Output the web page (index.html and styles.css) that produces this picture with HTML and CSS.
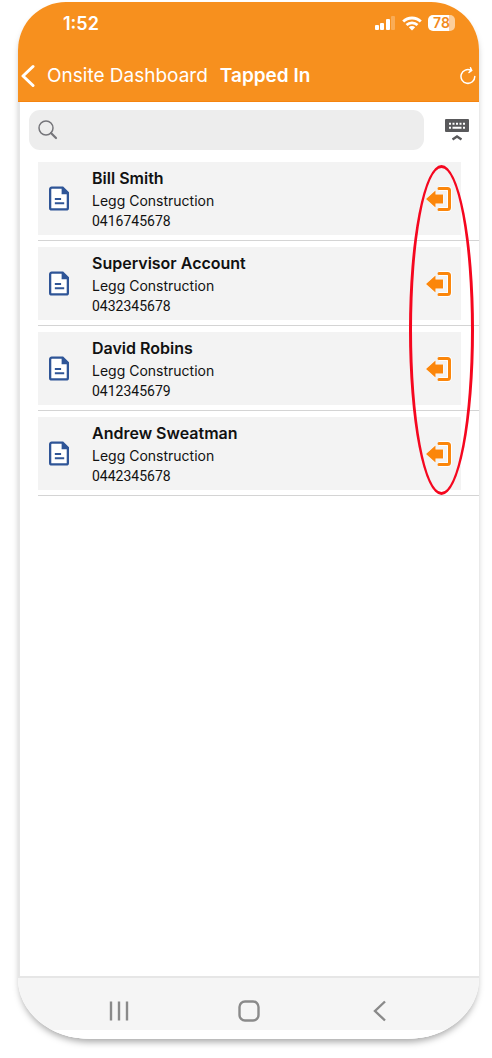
FILE: index.html
```html
<!DOCTYPE html>
<html lang="en">
<head>
	<meta charset="UTF-8">
	<meta name="viewport" content="width=device-width, initial-scale=1">
	<title>Tapped In</title>
	<link rel="stylesheet" href="styles.css">
</head>
<body>
<svg class="defs" width="0" height="0" aria-hidden="true">
	<symbol id="doc" viewBox="0 0 20 24">
		<path d="M3 1.500h10.500l5 5V21a1.500 1.500 0 0 1-1.500 1.500H3A1.500 1.500 0 0 1 1.500 21V3A1.500 1.500 0 0 1 3 1.500z" fill="#fff" stroke="#2f5597" stroke-width="2.200"/>
		<path d="M12.500 1v7H19V6.500L13.500 1z" fill="#2f5597"/>
		<path d="M6 12.500h6M6 16.500h9" stroke="#2f5597" stroke-width="2" fill="none"/>
	</symbol>
	<symbol id="exit" viewBox="0 0 26 26">
		<path d="M13 2.500h8.500a2 2 0 0 1 2 2v17a2 2 0 0 1-2 2H13" fill="none" stroke="#fff" stroke-width="5"/>
		<path d="M13 2.500h8.500a2 2 0 0 1 2 2v17a2 2 0 0 1-2 2H13" fill="none" stroke="#fb860b" stroke-width="3" stroke-linecap="round"/>
		<path d="M0 13l9.500-8.500v4H17v9H9.500v4z" fill="#fb860b" stroke="#fff" stroke-width="1" paint-order="stroke"/>
	</symbol>
</svg>
<div class="phone">
	<header>
		<div class="status">
			<span class="time">1:52</span>
			<svg width="20" height="14" viewBox="0 0 20 14" fill="#fff"><rect x="0" y="9" width="4" height="5" rx="1"/><rect x="5" y="7" width="4" height="7" rx="1"/><rect x="11" y="3" width="4" height="11" rx="1"/><rect x="16" y="0" width="4" height="14" rx="1" opacity=".25"/></svg>
			<svg class="wifi" width="20" height="15" viewBox="0 0 20 15" fill="none" stroke="#fff" stroke-width="2.800"><path d="M1.200 5.600a12.500 12.500 0 0 1 17.600 0M4.500 9a8 8 0 0 1 11 0"/><path d="M10 14.500L6.800 11.300a4.600 4.600 0 0 1 6.400 0z" fill="#fff" stroke="none"/></svg>
			<span class="battery">78</span>
		</div>
		<nav class="bar">
			<a class="back" href="#">
				<svg width="14" height="24" viewBox="0 0 14 24" fill="none" stroke="#fff" stroke-width="3" stroke-linecap="round" stroke-linejoin="round"><path d="M12 2.500L2 12l10 9.500"/></svg>
				Onsite Dashboard
			</a>
			<h1>Tapped In</h1>
			<button class="refresh" type="button" aria-label="Refresh">
				<svg width="16" height="18" viewBox="0 0 16 18" fill="none" stroke="#fff" stroke-width="1.500" stroke-linecap="round"><path d="M14.800 9.500A6.900 6.900 0 1 1 11 3.300"/><path d="M10.500.800l1.200 2.800-2.700 1.900" fill="#fff"/></svg>
			</button>
		</nav>
	</header>
	<main>
		<form class="search">
			<label>
				<svg width="20" height="20" viewBox="0 0 20 20" fill="none" stroke="#75757a"><circle cx="8" cy="8" r="7" stroke-width="1.500"/><path d="M13 13l5 5" stroke-width="2.200" stroke-linecap="round"/></svg>
				<input type="search" aria-label="Search">
			</label>
			<button type="button" aria-label="Keyboard">
				<svg width="24" height="22" viewBox="0 0 24 22"><rect width="24" height="13" rx="1" fill="#59595b"/><path d="M4 4.800h16" stroke="#fff" stroke-width="2" stroke-dasharray="2 1.500"/><path d="M4 8.800h2M7.500 8.800h9M18 8.800h2" stroke="#fff" stroke-width="2"/><path d="M7.500 20.500l4.500-3 4.500 3" fill="none" stroke="#59595b" stroke-width="2.400"/></svg>
			</button>
		</form>
		<ul class="people">
			<li>
				<div class="person">
					<svg class="doc"><use href="#doc"/></svg>
					<div class="info">
						<h2>Bill Smith</h2>
						<p>Legg Construction</p>
						<p class="tel">0416745678</p>
					</div>
					<button type="button" aria-label="Tap out Bill Smith"><svg><use href="#exit"/></svg></button>
				</div>
			</li>
			<li>
				<div class="person">
					<svg class="doc"><use href="#doc"/></svg>
					<div class="info">
						<h2>Supervisor Account</h2>
						<p>Legg Construction</p>
						<p class="tel">0432345678</p>
					</div>
					<button type="button" aria-label="Tap out Supervisor Account"><svg><use href="#exit"/></svg></button>
				</div>
			</li>
			<li>
				<div class="person">
					<svg class="doc"><use href="#doc"/></svg>
					<div class="info">
						<h2>David Robins</h2>
						<p>Legg Construction</p>
						<p class="tel">0412345679</p>
					</div>
					<button type="button" aria-label="Tap out David Robins"><svg><use href="#exit"/></svg></button>
				</div>
			</li>
			<li>
				<div class="person">
					<svg class="doc"><use href="#doc"/></svg>
					<div class="info">
						<h2>Andrew Sweatman</h2>
						<p>Legg Construction</p>
						<p class="tel">0442345678</p>
					</div>
					<button type="button" aria-label="Tap out Andrew Sweatman"><svg><use href="#exit"/></svg></button>
				</div>
			</li>
		</ul>
	</main>
	<footer>
		<button type="button" aria-label="Recent apps"><svg width="22" height="22" viewBox="0 0 22 22" fill="none" stroke="#8a8a8a" stroke-width="2.400"><path d="M3 1.500v19M11 1.500v19M19 1.500v19"/></svg></button>
		<button type="button" aria-label="Home"><svg width="22" height="22" viewBox="0 0 22 22" fill="none" stroke="#8a8a8a" stroke-width="2.400"><rect x="1.500" y="1.500" width="19" height="19" rx="5.500"/></svg></button>
		<button type="button" aria-label="Back"><svg width="22" height="22" viewBox="0 0 22 22" fill="none" stroke="#8a8a8a" stroke-width="2.400"><path d="M16 1.500L6 11l10 9.500"/></svg></button>
	</footer>
</div>
</body>
</html>
```
FILE: styles.css
```css
*, *:after {
	box-sizing: border-box;
}
body, ul, h1, h2, p {
	margin: 0;
	padding: 0;
}
body {
	padding: 2px 13px 19px 18px;
	background: #fff;
	font-family: Inter, "Liberation Sans", sans-serif;
	color: #111;
}
button {
	border: none;
	padding: 0;
	background: none;
}
svg {
	display: block;
	flex: none;
}
.defs {
	position: absolute;
}
.phone {
	display: flex;
	flex-direction: column;
	min-height: calc(100vh - 21px);
	border-radius: 48px 48px 72px 72px / 48px 48px 60px 60px;
	overflow: hidden;
	box-shadow: 0 5px 7px -2px rgba(0, 0, 0, .35);
}
header {
	background: #f7901e;
	border-bottom: 1px solid #f58410;
	color: #fff;
}
.status {
	display: flex;
	align-items: center;
	height: 42px;
	padding: 0 24px 0 45px;
}
.time {
	margin-right: auto;
	font-size: 18px;
	font-weight: 600;
}
.wifi {
	margin: 0 6px 0 7px;
}
.battery {
	width: 27px;
	line-height: 16px;
	border-radius: 5px;
	background: linear-gradient(90deg, #fff 78%, #fccf9c 78%);
	color: #f28a1c;
	font-size: 14px;
	font-weight: 600;
	text-align: center;
}
.bar {
	display: flex;
	align-items: center;
	height: 57px;
	padding: 6px 3px 0;
	font-size: 19px;
}
.back {
	display: flex;
	align-items: center;
	gap: 12px;
	color: #fff;
	text-decoration: none;
	white-space: nowrap;
}
h1 {
	margin-left: 12px;
	font-size: 19px;
	font-weight: 600;
	white-space: nowrap;
}
.refresh {
	margin-left: auto;
}
main {
	flex: 1;
	border-left: 2px solid #e6e6e6;
	background: #fff;
}
.search {
	display: flex;
	align-items: center;
	gap: 21px;
	padding: 8px 10px 6px 9px;
}
.search label {
	display: flex;
	flex: 1;
	align-items: center;
	gap: 8px;
	height: 40px;
	padding: 0 9px;
	border-radius: 11px;
	background: #ededed;
}
.search input {
	flex: 1;
	min-width: 0;
	border: none;
	outline: none;
	background: none;
	font: inherit;
}
.people {
	position: relative;
	margin-left: 18px;
	list-style: none;
}
/* red ring over the tap out buttons */
.people:after {
	content: '';
	position: absolute;
	top: 9px;
	right: 5px;
	bottom: 1px;
	width: 65px;
	border: 3px solid #f5071f;
	border-radius: 50%;
	pointer-events: none;
}
.people li {
	padding: 6px 18px 5px 0;
	border-bottom: 1px solid #d4d4d4;
}
.person {
	display: flex;
	align-items: center;
	height: 73px;
	padding: 0 9px 0 10px;
	background: #f3f3f3;
}
.doc {
	width: 22px;
	height: 25px;
}
.info {
	flex: 1;
	margin-left: 22px;
	padding-top: 2px;
}
h2 {
	font-size: 16px;
	font-weight: 600;
	line-height: 23px;
}
p {
	font-size: 14px;
	line-height: 21px;
}
.tel {
	font-family: Roboto, sans-serif;
}
.person button svg {
	width: 26px;
	height: 26px;
}
footer {
	display: flex;
	align-items: center;
	justify-content: space-around;
	height: 63px;
	padding: 0 34px 0 36px;
	border-top: 2px solid #e6e6e6;
	border-bottom: 9px solid #fff;
	background: #f5f5f5;
}
footer button {
	padding-top: 14px;
}
```
